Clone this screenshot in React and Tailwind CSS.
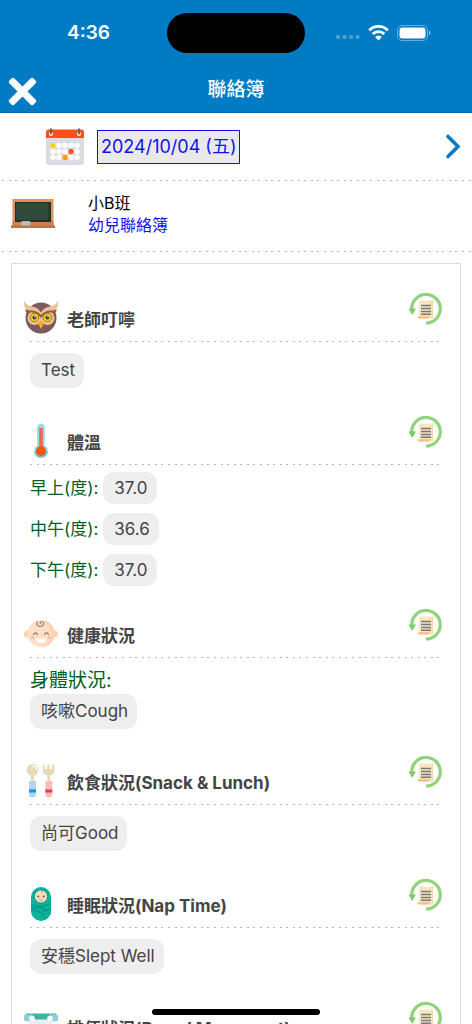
import clsx from "clsx";

const FONT = "font-['Inter','Noto_Sans_CJK_TC',sans-serif]";

const DottedLine = ({ className }) => (
  <div
    aria-hidden="true"
    className={clsx(
      "bg-[repeating-linear-gradient(to_right,#b8b8b8_0_2px,transparent_2px_7px,#b8b8b8_7px_9px,transparent_9px_13px,#b8b8b8_13px_15px,transparent_15px_20px,#b8b8b8_20px_22px,transparent_22px_26px,#b8b8b8_26px_28px,transparent_28px_33px,#b8b8b8_33px_35px,transparent_35px_39px,#b8b8b8_39px_41px,transparent_41px_46px)]",
      className,
    )}
  />
);

const CalendarIcon = () => (
  <svg viewBox="0 0 38 38" className="w-[38px] h-[38px]" aria-hidden="true">
    <path d="M0 9h38v25.500a2.500 2.500 0 0 1-2.500 2.500h-33A2.500 2.500 0 0 1 0 34.500z" fill="#d9dce1" />
    <path d="M2.500 1.500h33A2.500 2.500 0 0 1 38 4v6H0V4a2.500 2.500 0 0 1 2.500-2.500z" fill="#ff5019" />
    {[7, 13, 19, 25, 31].map((x) =>
      [17.500, 23.500, 29.500].map((y) => (
        <circle key={`${x}-${y}`} cx={x} cy={y} r="2.700" fill="#fff" />
      )),
    )}
    <circle cx="7" cy="17.500" r="2.700" fill="#ffd200" />
    <circle cx="25" cy="23.500" r="2.700" fill="#ff5019" />
    <circle cx="19" cy="29.500" r="2.700" fill="#ff9811" />
    <circle cx="5" cy="6" r="2" fill="#fff" />
    <circle cx="33" cy="6" r="2" fill="#fff" />
    <path d="M5 1v5M33 1v5" stroke="#4d5468" strokeWidth="1.600" strokeLinecap="round" />
  </svg>
);

const BlackboardIcon = () => (
  <svg viewBox="0 0 44 30" className="w-11 h-[30px]" aria-hidden="true">
    <path d="M1.500 0h41v27h-41z" fill="#e0905a" />
    <path d="M1.500 22h41v5h-41z" fill="#d38050" />
    <path d="M4 3h36v20H4z" fill="#1f3328" />
    <path d="M5 4h32.500v17H5z" fill="#324a3c" />
    <path d="M0 26.500h44V29H0z" fill="#bd7049" />
    <rect x="10" y="22" width="9.500" height="4.500" rx="1.500" fill="#b8bab9" />
  </svg>
);

const OwlIcon = () => (
  <svg viewBox="0 0 34 34" className="w-[34px] h-[34px]" aria-hidden="true">
    <circle cx="17" cy="17" r="15.500" fill="#7d5a5d" />
    <path d="M1 9c4-2 11-1 16 4 5-5 12-6 16-4l-3 5H4z" fill="#995842" />
    <path d="M0 0c2 4 6 5 10 6 3 .7 5.500 3 7 5.500C18.500 9 21 6.700 24 6c4-1 8-2 10-6 0 6-1 8.500-5 9.500-5 .5-9 2-12 6-3-4-7-5.500-12-6C1 8.500 0 6 0 0z" fill="#e9c097" />
    <circle cx="10.500" cy="17" r="7" fill="#e9c097" />
    <circle cx="23.500" cy="17" r="7" fill="#e9c097" />
    <path d="M3 12c5-2 10 0 14 5 4-5 9-7 14-5-1-3-8-4-14 2-6-6-13-5-14-2z" fill="#995842" />
    <circle cx="10.500" cy="16.500" r="4.200" fill="#f5d51c" stroke="#a87710" strokeWidth="1" />
    <circle cx="23.500" cy="16.500" r="4.200" fill="#f5d51c" stroke="#a87710" strokeWidth="1" />
    <circle cx="10.500" cy="16.500" r="2" fill="#333454" />
    <circle cx="23.500" cy="16.500" r="2" fill="#333454" />
    <circle cx="11" cy="15.800" r=".8" fill="#fff" />
    <circle cx="24" cy="15.800" r=".8" fill="#fff" />
    <path d="M17 20c2 0 3 1.500 2.500 3.200L17 28l-2.500-4.800C14 21.500 15 20 17 20z" fill="#ffae1a" />
  </svg>
);

const ThermometerIcon = () => (
  <svg viewBox="0 0 34 34" className="w-[34px] h-[34px]" aria-hidden="true">
    <path d="M17 0a3.800 3.800 0 0 1 3.800 3.800v17.700a6.800 6.800 0 1 1-7.600 0V3.800A3.800 3.800 0 0 1 17 0z" fill="#8fdfdf" />
    <path d="M10.200 27a6.800 6.800 0 1 0 13.600 0z" fill="#6fc6d2" />
    <rect x="15.200" y="4" width="3.600" height="22" fill="#f4644f" />
    <circle cx="17" cy="27" r="5" fill="#f9560f" />
  </svg>
);

const BabyIcon = () => (
  <svg viewBox="0 0 34 34" className="w-[34px] h-[34px]" aria-hidden="true">
    <ellipse cx="3.500" cy="17" rx="3.500" ry="3.500" fill="#ffd0ac" />
    <ellipse cx="30.500" cy="17" rx="3.500" ry="3.500" fill="#ffd0ac" />
    <path d="M17 3.500c8 0 13 5.500 13.500 12.500C31 23.500 25 30 17 30S3 23.500 3.500 16C4 9 9 3.500 17 3.500z" fill="#ffdfc7" />
    <path d="M18 3.500c8 0 12 5.500 12.500 12.500.5 7.500-5 14-13 14 12-4 13-20 .5-26.500z" fill="#ffd3b0" />
    <path d="M13.500 4c-2 3 0 5.500 3 5.500 3.500 0 4.500-4.500 1.500-5-2.500-.2-2.500 2.500-.5 2.500" fill="none" stroke="#a8846b" strokeWidth="1.200" />
    <path d="M9.500 18c.5-3 3.500-3 4 0M20.500 18c.5-3 3.500-3 4 0" fill="none" stroke="#8a6a60" strokeWidth="1.200" />
    <circle cx="8.500" cy="20.500" r="1.600" fill="#ffb9a0" />
    <circle cx="25.500" cy="20.500" r="1.600" fill="#ffb9a0" />
    <path d="M12 21.500h10c0 6-10 6-10 0z" fill="#fff" />
  </svg>
);

const CutleryIcon = () => (
  <svg viewBox="0 0 34 34" className="w-[34px] h-[34px]" aria-hidden="true">
    <path d="M7 10h3v9H7zM23.300 10h3v9h-3z" fill="#e6dcb9" />
    <circle cx="8.500" cy="6" r="6" fill="#e6dcb9" />
    <path d="M8.500 2c2.500 0 4 1.500 4 4" fill="none" stroke="#fff" strokeWidth="1.300" />
    <path d="M18.800 1.500c0-1.300 2-1.300 2 0V5h2.300V1.500c0-1.300 2.600-1.300 2.600 0V5H28V1.500c0-1.300 2.500-1.300 2.500 0V7c0 6-11.700 6-11.700 0z" fill="#e6dcb9" />
    <path d="M5 17h7v13a3.500 3.500 0 0 1-7 0z" fill="#acd6f6" />
    <path d="M21.300 17h7v13a3.500 3.500 0 0 1-7 0z" fill="#fbbcb9" />
    <path d="M5 25.500h7v3H5z" fill="#0696ea" />
    <path d="M21.300 25.500h7v3h-7z" fill="#e5395c" />
  </svg>
);

const SwaddleIcon = () => (
  <svg viewBox="0 0 34 34" className="w-[34px] h-[34px]" aria-hidden="true">
    <rect x="7" y="0" width="20" height="34" rx="10" fill="#07b39b" />
    <path d="M7 18c6 0 13 3 20 9M7 23c6 0 11 3 16 9M27 16c-5 3-11 5-20 5M27 21c-3 2-6 3-9 3" fill="none" stroke="#078b7f" strokeWidth="1" />
    <circle cx="17" cy="9.500" r="7" fill="#078b7f" />
    <circle cx="17" cy="9.500" r="6.200" fill="#fbdcc3" />
    <path d="M17 3.500c2 0 2 2.200 0 2.200" fill="none" stroke="#b98058" strokeWidth="1" />
    <circle cx="14.300" cy="9.500" r=".9" fill="#554840" />
    <circle cx="19.700" cy="9.500" r=".9" fill="#554840" />
    <path d="M15.300 12.500c1 1 2.400 1 3.400 0" fill="none" stroke="#d37b68" strokeWidth=".9" />
  </svg>
);

const DiaperIcon = () => (
  <svg viewBox="0 0 34 34" className="w-[34px] h-[34px]" aria-hidden="true">
    <path d="M1 8h32v4c-7 1-10 6-11 14H12C11 18 8 13 1 12z" fill="#e9eef0" />
    <path d="M2 3.500h30v6H2z" fill="#41b39d" />
    <rect x="0" y="4.500" width="9" height="6.500" rx="1" fill="#8fcfdc" />
    <rect x="25" y="4.500" width="9" height="6.500" rx="1" fill="#8fcfdc" />
    <circle cx="8" cy="8.500" r="2.800" fill="#fff" />
    <circle cx="26" cy="8.500" r="2.800" fill="#fff" />
  </svg>
);

const HistoryIcon = () => (
  <svg viewBox="0 0 34 33" className="w-[34px] h-[33px]" aria-hidden="true">
    <path d="M3.700 16A14.300 14.300 0 1 1 18 30" fill="none" stroke="#8fd47b" strokeWidth="3.200" />
    <path d="M.5 15.500H8L4.200 22z" fill="#7ccb68" />
    <path d="M11 7.500h14v18H11z" fill="#f8e6c0" />
    <path d="M23.500 7.500H25v18h-1.500z" fill="#f3d9a8" />
    <path d="M9.500 23.200h12v2.300H11a2 2 0 0 1-1.500-2.300z" fill="#ffbb85" />
    <path d="M13 12.500h10M13 15.500h10M13 18.500h10M13 21.200h10" stroke="#77797b" strokeWidth="1.500" />
  </svg>
);

const Chip = ({ children, compact }) => (
  <span
    className={clsx(
      "inline-flex items-center pl-[11px] pr-[9px] pt-px rounded-[11px] bg-[#eeeeee] text-[17px] text-[#444444]",
      compact ? "h-8" : "h-[35px]",
    )}
  >
    {children}
  </span>
);

const Section = ({ icon: Icon, title, children }) => (
  <section>
    <div className="flex items-end justify-between h-12 pl-3 pr-[18px]">
      <div className="flex items-end gap-[9px]">
        <div className="pb-[6px]">
          <Icon />
        </div>
        <h2 className="pb-1 text-[17px] leading-[33px] font-bold text-[#444444] whitespace-nowrap">
          {title}
        </h2>
      </div>
      <button type="button" aria-label={`${title} 歷史紀錄`} className="self-start">
        <HistoryIcon />
      </button>
    </div>
    <DottedLine className="h-px ml-[18px] mr-[21px]" />
    <div className="px-[18px]">{children}</div>
  </section>
);

const temperatures = [
  { label: "早上(度):", value: "37.0" },
  { label: "中午(度):", value: "36.6" },
  { label: "下午(度):", value: "37.0" },
];

const StatusBar = () => (
  <div className="relative flex items-center justify-between h-[66px] pl-[67px] pr-[41px]">
    <span className="text-[19px] font-semibold">4:36</span>
    <div className="absolute left-1/2 top-[13px] -translate-x-1/2 w-[138px] h-10 rounded-full bg-black" />
    <div className="flex items-center gap-2">
      <svg viewBox="0 0 24 4" className="w-6 h-1 mt-2" aria-hidden="true">
        {[0, 6.500, 13, 19.500].map((x) => (
          <rect key={x} x={x} y="0" width="4" height="4" rx="1.300" fill="#fff" fillOpacity=".28" />
        ))}
      </svg>
      <svg viewBox="0 0 21 16" className="w-[21px] h-4" aria-hidden="true">
        <path d="M1.200 5.300a13.200 13.200 0 0 1 18.600 0M4.700 9a8.300 8.300 0 0 1 11.600 0" fill="none" stroke="#fff" strokeWidth="2.800" />
        <path d="M10.500 15.500l-3.400-3.400a5 5 0 0 1 6.800 0z" fill="#fff" />
      </svg>
      <svg viewBox="0 0 34 16" className="w-[34px] h-4" aria-hidden="true">
        <rect x=".5" y=".5" width="30" height="15" rx="4.500" fill="none" stroke="#fff" strokeOpacity=".4" />
        <rect x="2.500" y="2.500" width="26" height="11" rx="3" fill="#fff" />
        <path d="M32 5.500c2 .8 2 4.200 0 5z" fill="#fff" fillOpacity=".5" />
      </svg>
    </div>
  </div>
);

export default function App() {
  return (
    <div className={clsx("relative flex flex-col h-screen overflow-hidden bg-white", FONT)}>
      <header className="shrink-0 bg-[#007bc4] text-white border-b border-[#0068ae]">
        <StatusBar />
        <div className="relative flex items-center justify-center h-[46px]">
          <button type="button" aria-label="關閉" className="absolute left-2 top-[11px]">
            <svg viewBox="0 0 29 29" className="w-[29px] h-[29px]" aria-hidden="true">
              <g fill="#fff">
                <rect x="-2.500" y="11" width="34" height="7" rx="1.800" transform="rotate(45 14.500 14.500)" />
                <rect x="-2.500" y="11" width="34" height="7" rx="1.800" transform="rotate(-45 14.500 14.500)" />
              </g>
            </svg>
          </button>
          <h1 className="pt-[3px] text-[19px] font-medium">聯絡簿</h1>
        </div>
      </header>

      <main className="flex-1 min-h-0 overflow-y-auto [scrollbar-width:none]">
        {/* Date picker row */}
        <div className="flex items-center h-[67px] pl-[46px] pr-[11px]">
          <CalendarIcon />
          <button
            type="button"
            className="ml-[13px] h-[34px] px-[3px] border border-[#1010ee] bg-[#e9e9e9] text-[18px] text-[#1010ee] whitespace-nowrap"
          >
            2024/10/04 (五)
          </button>
          <button type="button" aria-label="後一天" className="ml-auto">
            <svg viewBox="0 0 16 26" className="w-4 h-[26px]" aria-hidden="true">
              <path d="M3 2.500L13 12.500 3 22.500" fill="none" stroke="#0b7ac2" strokeWidth="3.600" strokeLinecap="round" />
            </svg>
          </button>
        </div>
        <DottedLine className="h-px ml-[2px]" />

        {/* Class row */}
        <div className="flex items-start h-[70px] pl-[11px] pt-[11px]">
          <div className="pt-[7px]">
            <BlackboardIcon />
          </div>
          <div className="ml-[33px] text-[16px] leading-[22px]">
            <p className="text-black">小B班</p>
            <a href="#book" className="block text-[#1010ee]">
              幼兒聯絡簿
            </a>
          </div>
        </div>
        <DottedLine className="h-px ml-[2px]" />

        {/* Contact book */}
        <div className="mx-[11px] mt-[11px] pt-[29px] pb-10 border border-[#dddddd]">
          <Section icon={OwlIcon} title="老師叮嚀">
            <div className="pt-[11px] pb-7 flex">
              <Chip>Test</Chip>
            </div>
          </Section>

          <Section icon={ThermometerIcon} title="體溫">
            <dl className="flex flex-col gap-[9px] pt-[7px] pb-[23px]">
              {temperatures.map(({ label, value }) => (
                <div key={label} className="flex items-center gap-[5px]">
                  <dt className="pt-px text-[17px] text-[#00601c]">{label}</dt>
                  <dd className="flex">
                    <Chip compact>{value}</Chip>
                  </dd>
                </div>
              ))}
            </dl>
          </Section>

          <Section icon={BabyIcon} title="健康狀況">
            <p className="pt-[10px] text-[19px] leading-[26px] text-[#00601c]">身體狀況:</p>
            <div className="pb-[27px] flex">
              <Chip>咳嗽Cough</Chip>
            </div>
          </Section>

          <Section icon={CutleryIcon} title="飲食狀況(Snack & Lunch)">
            <div className="pt-[11px] pb-7 flex">
              <Chip>尚可Good</Chip>
            </div>
          </Section>

          <Section icon={SwaddleIcon} title="睡眠狀況(Nap Time)">
            <div className="pt-[11px] pb-7 flex">
              <Chip>安穩Slept Well</Chip>
            </div>
          </Section>

          <Section icon={DiaperIcon} title="排便狀況(Bowel Movement)" />
        </div>
      </main>

      {/* Home indicator */}
      <div className="absolute bottom-[9px] left-1/2 -translate-x-1/2 w-[168px] h-[6px] rounded-full bg-black" />
    </div>
  );
}
